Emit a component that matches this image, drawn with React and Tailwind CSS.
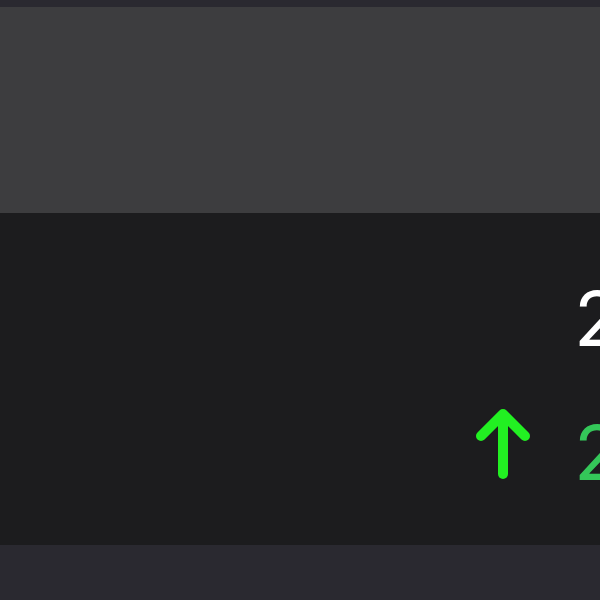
export default function App() {
  return (
    <div className="h-[600px] w-[600px] overflow-hidden flex flex-col bg-[#2a2930] font-['Inter',sans-serif]">
      <div className="h-[7px] bg-[#2a2930]" />
      <div className="h-[206px] bg-[#3d3d3f]" />
      <div className="h-[332px] bg-[#1c1c1e] flex flex-col overflow-hidden">
        <div className="pl-[574px] pt-[67px] text-[76px] leading-none font-normal text-white whitespace-nowrap">24</div>
        <div className="flex items-start pl-[473px] mt-[48px] whitespace-nowrap">
          <svg width="60" height="72" viewBox="0 0 60 72" fill="none" stroke="#22f022" strokeWidth="10" strokeLinecap="round" strokeLinejoin="round" className="shrink-0 mt-[3px]">
            <path d="M8 29 30 7 52 29" />
            <path d="M30 8V67" />
          </svg>
          <span className="ml-[41px] mt-[10px] text-[76px] leading-none font-normal text-[#34c759]">24</span>
        </div>
      </div>
      <div className="flex-1 bg-[#2a2930]" />
    </div>
  );
}
